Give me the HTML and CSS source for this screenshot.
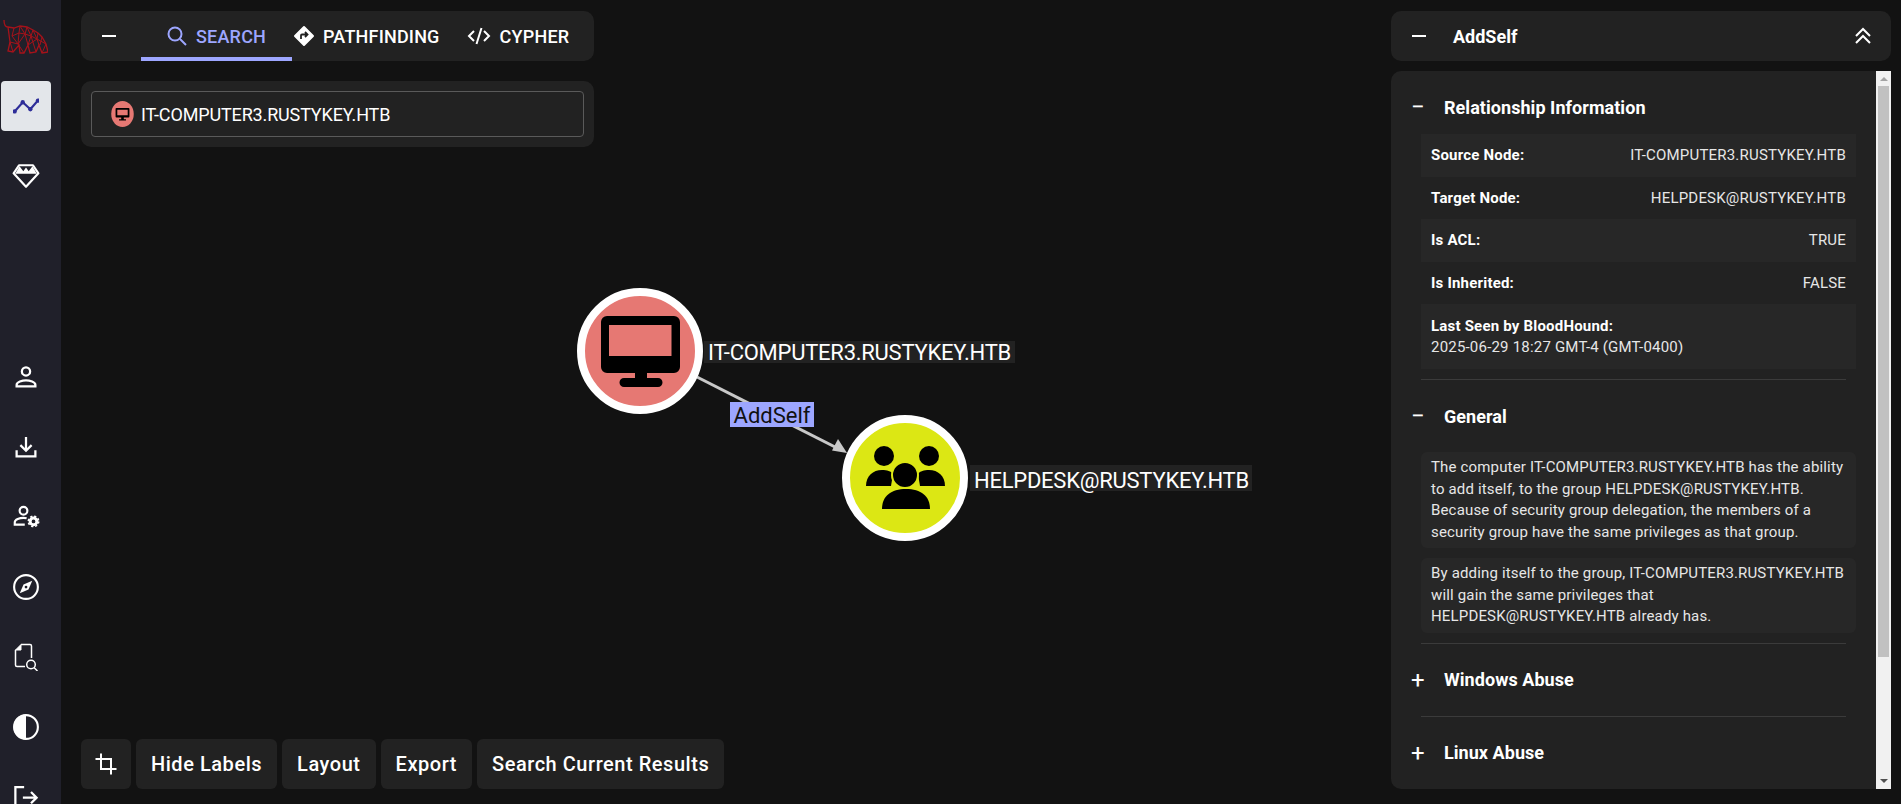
FILE: index.html
```html
<!DOCTYPE html>
<html lang="en">
<head>
  <meta charset="UTF-8">
  <title>BloodHound</title>
  <link rel="stylesheet" href="styles.css">
</head>
<body>
  <nav class="sidebar">
    <svg class="logo" viewBox="0 0 45 36" fill="none" stroke="#a5121a" stroke-width="1">
      <path d="M1 2C1 6 2 9 5 9L11 10L17 8L24 9L30 12L35 15L39 19L43 26L45 34L39 35L36 27L33 34L27 35L25 27L21 35L17 35L16 27L10 34L5 33L7 24L5 9" stroke-width="1.300"/>
      <path d="M11 10L9 18L16 15L17 8L22 16L24 9L28 18L30 12L34 21L35 15L39 19L37 27M16 15L22 16L28 18L34 21L43 26L39 35M9 18L15 26L16 15M7 24L15 26L22 16L25 27L28 18L33 34M34 21L36 27M15 26L21 35M25 27L34 21M10 34L7 24"/>
    </svg>
    <div class="nav-btn active">
      <svg viewBox="0 0 24 24" class="nav-icon"><path d="M1.500 17L9 8.500 16 15 23 7" fill="none" stroke="#2e2e99" stroke-width="2"/><circle cx="1.500" cy="17" r="2" fill="#2e2e99"/><circle cx="9" cy="8.500" r="2" fill="#2e2e99"/><circle cx="16" cy="15" r="2" fill="#2e2e99"/><circle cx="23" cy="7" r="2" fill="#2e2e99"/></svg>
    </div>
    <div class="nav-btn">
      <svg viewBox="0 0 26 24" class="nav-icon gem"><path d="M6.500 2h13l5 7.500L13 22 1.500 9.500z" fill="none" stroke="#fff" stroke-width="2" stroke-linejoin="round"/><path d="M7 3l3.500 4.500L13 4l2.500 3.500L19 3l4 7H3z" fill="#fff"/></svg>
    </div>
    <div class="nav-lower">
      <div class="nav-btn">
        <svg viewBox="0 0 24 24" class="nav-icon"><circle cx="12" cy="7.500" r="3.300" fill="none" stroke="#fff" stroke-width="1.800"/><path d="M4.500 19.500v-1.200c0-2.300 4.500-3.600 7.500-3.600s7.500 1.300 7.500 3.600v1.200z" fill="none" stroke="#fff" stroke-width="1.800"/></svg>
      </div>
      <div class="nav-btn">
        <svg viewBox="0 0 24 24" class="nav-icon"><path d="M12 4v10.500M7.500 10.500l4.500 4.500 4.500-4.500M4.500 14.500v5h15v-5" fill="none" stroke="#fff" stroke-width="1.800"/></svg>
      </div>
      <div class="nav-btn">
        <svg viewBox="0 0 24 24" class="nav-icon"><circle cx="10" cy="7" r="3.100" fill="none" stroke="#fff" stroke-width="1.700"/><path d="M12.500 13c-.8-.2-1.700-.3-2.500-.3-3 0-7 1.300-7 3.600v1.800h8" fill="none" stroke="#fff" stroke-width="1.700"/><circle cx="18" cy="15.500" r="2.700" fill="none" stroke="#fff" stroke-width="2.400"/><circle cx="18" cy="15.500" r="4.200" fill="none" stroke="#fff" stroke-width="1.200" stroke-dasharray="1.800 1.500"/></svg>
      </div>
      <div class="nav-btn">
        <svg viewBox="0 0 24 24" class="nav-icon"><circle cx="12" cy="12" r="9.500" fill="none" stroke="#fff" stroke-width="1.700"/><path d="M17 7l-3 7-7 3 3-7z" fill="#fff"/><circle cx="12" cy="12" r="1.100" fill="#20202a"/></svg>
      </div>
      <div class="nav-btn">
        <svg viewBox="0 0 26 28" class="nav-icon tall"><path d="M2.500 7V22a1.500 1.500 0 0 0 1.500 1.500h8M8 1.500h9A1.500 1.500 0 0 1 18.500 3V15" fill="none" stroke="#fff" stroke-width="1.500"/><path d="M8 1.500V7H2.500z" fill="#fff" stroke="#fff" stroke-linejoin="round"/><circle cx="18" cy="21.500" r="4.300" fill="none" stroke="#fff" stroke-width="1.500"/><path d="M21 24.500l3.500 3.500" stroke="#fff" stroke-width="1.500"/></svg>
      </div>
      <div class="nav-btn">
        <svg viewBox="0 0 24 24" class="nav-icon"><circle cx="12" cy="12" r="9.500" fill="none" stroke="#fff" stroke-width="1.700"/><path d="M12 2a10 10 0 0 0 0 20z" fill="#fff"/></svg>
      </div>
      <div class="nav-btn">
        <svg viewBox="0 0 24 24" class="nav-icon"><path d="M10.500 4H3.500v17h7M9.500 12.500h11M16 8l4.500 4.500L16 17" fill="none" stroke="#fff" stroke-width="1.800"/></svg>
      </div>
    </div>
  </nav>

  <main class="graph">
    <svg class="canvas" viewBox="0 0 1840 804" width="1840" height="804">
      <line x1="636" y1="377" x2="780" y2="450" stroke="#c8c8c8" stroke-width="3"/>
      <path d="M786 453l-15-2.500 6-11.500z" fill="#c8c8c8"/>
      <circle cx="579" cy="351" r="59" fill="#e67873" stroke="#fff" stroke-width="8"/>
      <circle cx="844" cy="478" r="59" fill="#dce714" stroke="#fff" stroke-width="8"/>

      <path d="M546 316h67a6 6 0 0 1 6 6v45a6 6 0 0 1-6 6h-27v5h11a4.500 4.500 0 0 1 0 9h-34a4.500 4.500 0 0 1 0-9h11v-5h-28a6 6 0 0 1-6-6v-45a6 6 0 0 1 6-6zM548 325v31h62.500v-31z" fill="#000" fill-rule="evenodd"/>

      <g fill="#000">
        <ellipse cx="823" cy="456" rx="10" ry="10"/>
        <ellipse cx="868" cy="456" rx="10" ry="10"/>
        <path d="M805 486c0-10 7-16 16-16 5 0 9 1 11 4l-2 12z"/>
        <path d="M884 486c0-10-7-16-16-16-5 0-9 1-11 4l2 12z"/>
        <ellipse cx="844" cy="475" rx="13" ry="13" stroke="#dce714" stroke-width="2"/>
        <path d="M821 509c0-13 9-20 24-20s24 7 24 20z"/>
      </g>

      <rect class="label-bg" x="643" y="341" width="311" height="22"/>
      <text class="node-label" x="647" y="360">IT-COMPUTER3.RUSTYKEY.HTB</text>
      <rect class="label-bg" x="909" y="465" width="282" height="26"/>
      <text class="node-label" x="913" y="488">HELPDESK@RUSTYKEY.HTB</text>
      <rect x="669" y="402" width="84" height="25" fill="#9da6ff"/>
      <text class="edge-label" x="711" y="423" text-anchor="middle">AddSelf</text>
    </svg>

    <section class="search-area">
      <div class="card tabs">
        <span class="tab-toggle"><svg viewBox="0 0 24 24" class="icon"><path d="M5 12h14" stroke="currentColor" stroke-width="2"/></svg></span>
        <div class="tab selected">
          <svg viewBox="0 0 24 24" class="icon"><circle cx="10" cy="10" r="6.500" fill="none" stroke="currentColor" stroke-width="2"/><path d="M15 15l6 6" stroke="currentColor" stroke-width="2"/></svg>
          SEARCH
        </div>
        <div class="tab">
          <svg viewBox="0 0 24 24" class="icon"><path d="M12 3L21 12 12 21 3 12z" fill="#fff" stroke="#fff" stroke-linejoin="round" stroke-width="2"/><path d="M9 15v-3.500a1 1 0 0 1 1-1h5M13 8l2.500 2.500L13 13" fill="none" stroke="#222" stroke-width="1.800"/></svg>
          PATHFINDING
        </div>
        <div class="tab code">
          <svg viewBox="0 0 24 24" class="icon"><path d="M7 7l-5 5 5 5M17 7l5 5-5 5M14.500 4l-5 16" fill="none" stroke="#fff" stroke-width="2"/></svg>
          CYPHER
        </div>
      </div>
      <div class="card search-card">
        <div class="search-input">
          <svg viewBox="0 0 26 30" class="input-icon"><ellipse cx="13" cy="15" rx="13" ry="15" fill="#e67873"/><path d="M6 8h14a1 1 0 0 1 1 1v9a1 1 0 0 1-1 1h-5.500v2h2.500v1.500H9V21h2.500v-2H6a1 1 0 0 1-1-1V9a1 1 0 0 1 1-1zm1 2v6.500h12V10z" fill="#000" fill-rule="evenodd"/></svg>
          IT-COMPUTER3.RUSTYKEY.HTB
        </div>
      </div>
    </section>

    <div class="graph-buttons">
      <div class="graph-btn square"><svg viewBox="0 0 24 24" class="icon"><path d="M7 1.500V17h15.500M1.500 7H17v15.500" fill="none" stroke="#fff" stroke-width="2"/></svg></div>
      <div class="graph-btn">Hide Labels</div>
      <div class="graph-btn">Layout</div>
      <div class="graph-btn">Export</div>
      <div class="graph-btn">Search Current Results</div>
    </div>

    <aside class="details">
      <div class="card details-head">
        <svg viewBox="0 0 24 24" class="icon"><path d="M5 12h14" stroke="#fff" stroke-width="2"/></svg>
        <span class="details-title">AddSelf</span>
        <svg viewBox="0 0 24 24" class="icon collapse"><path d="M5 12l7-7 7 7M5 19l7-7 7 7" fill="none" stroke="#fff" stroke-width="2"/></svg>
      </div>
      <div class="details-body">
        <div class="details-scroll">
          <div class="section-head first">
            <span class="sign">&minus;</span>
            <h2>Relationship Information</h2>
          </div>
          <div class="prop shaded"><b>Source Node:</b><span>IT-COMPUTER3.RUSTYKEY.HTB</span></div>
          <div class="prop"><b>Target Node:</b><span>HELPDESK@RUSTYKEY.HTB</span></div>
          <div class="prop shaded"><b>Is ACL:</b><span>TRUE</span></div>
          <div class="prop"><b>Is Inherited:</b><span>FALSE</span></div>
          <div class="prop shaded stacked"><b>Last Seen by BloodHound:</b><span>2025-06-29 18:27 GMT-4 (GMT-0400)</span></div>
          <hr class="rule">

          <div class="section-head">
            <span class="sign">&minus;</span>
            <h2>General</h2>
          </div>
          <p class="info">The computer IT-COMPUTER3.RUSTYKEY.HTB has the ability to add itself, to the group HELPDESK@RUSTYKEY.HTB. Because of security group delegation, the members of a security group have the same privileges as that group.</p>
          <p class="info">By adding itself to the group, IT-COMPUTER3.RUSTYKEY.HTB will gain the same privileges that HELPDESK@RUSTYKEY.HTB already has.</p>
          <hr class="rule">

          <div class="section-head">
            <span class="sign">+</span>
            <h2>Windows Abuse</h2>
          </div>
          <hr class="rule tight">

          <div class="section-head">
            <span class="sign">+</span>
            <h2>Linux Abuse</h2>
          </div>
        </div>
        <div class="scrollbar">
          <span class="arrow up"></span>
          <span class="thumb"></span>
          <span class="arrow down"></span>
        </div>
      </div>
    </aside>
  </main>
</body>
</html>
```

FILE: styles.css
```css
html, body {
  margin: 0;
  padding: 0;
  height: 100%;
  overflow: hidden;
  background-color: #121212;
  font-family: 'Roboto', sans-serif;
  color: #fff;
}

body {
  display: flex;
}

.sidebar {
  width: 61px;
  flex-shrink: 0;
  height: 100%;
  background-color: #20202a;
  overflow: hidden;
  padding-top: 18px;
  box-sizing: border-box;
}

.logo {
  display: block;
  width: 45px;
  height: 36px;
  margin: 0 0 27px 3px;
}

.nav-btn {
  width: 50px;
  height: 50px;
  margin: 0 0 20px 1px;
  border-radius: 4px;
  display: flex;
  align-items: center;
  justify-content: center;
}

.nav-btn.active {
  background-color: #e3e6ea;
}

.nav-icon {
  width: 30px;
  height: 30px;
  flex-shrink: 0;
}

.nav-btn.active .nav-icon {
  width: 26px;
  height: 26px;
}

.nav-icon.gem {
  width: 28px;
  height: 26px;
}

.nav-icon.tall {
  width: 26px;
  height: 28px;
}

.nav-lower {
  margin-top: 151px;
}

.graph {
  position: relative;
  flex: 1;
  height: 100%;
}

.canvas {
  display: block;
}

.label-bg {
  fill: #222;
}

.node-label {
  font-size: 22px;
  letter-spacing: -0.25px;
  fill: #fff;
}

.edge-label {
  font-size: 22px;
  fill: #111;
}

.card {
  background-color: #222;
  border-radius: 10px;
}

.icon {
  width: 24px;
  height: 24px;
  flex-shrink: 0;
}

.search-area {
  position: absolute;
  top: 11px;
  left: 20px;
  width: 513px;
  display: flex;
  flex-direction: column;
  gap: 20px;
}

.tabs {
  height: 50px;
  display: flex;
  align-items: stretch;
  overflow: hidden;
  color: #fff;
}

.tab-toggle {
  width: 60px;
  flex-shrink: 0;
  display: flex;
  align-items: center;
  padding-left: 16px;
  box-sizing: border-box;
}

.tab {
  display: flex;
  flex-shrink: 0;
  align-items: center;
  gap: 7px;
  padding: 0 27px 0 0;
  font-size: 18px;
  font-weight: 500;
  letter-spacing: 0.2px;
}

.tab.code {
  gap: 9px;
}

.tab.selected {
  width: 151px;
  box-sizing: border-box;
  padding: 0 0 0 24px;
  color: #9da6ff;
  box-shadow: inset 0 -4px 0 #9da6ff;
}

.search-card {
  padding: 10px;
}

.search-input {
  height: 46px;
  border: 1px solid #5a5a5a;
  border-radius: 4px;
  box-sizing: border-box;
  display: flex;
  align-items: center;
  gap: 6px;
  padding-left: 18px;
  font-size: 18px;
  letter-spacing: -0.15px;
}

.input-icon {
  width: 25px;
  height: 26px;
}

.graph-buttons {
  position: absolute;
  left: 20px;
  top: 739px;
  display: flex;
  gap: 5px;
}

.graph-btn {
  height: 50px;
  padding: 0 15px;
  background-color: #222;
  border-radius: 6px;
  display: flex;
  align-items: center;
  font-size: 20px;
  font-weight: 500;
  letter-spacing: 0.54px;
}

.graph-btn.square {
  width: 50px;
  padding: 0;
  justify-content: center;
}

.details {
  position: absolute;
  top: 11px;
  left: 1330px;
  width: 500px;
  display: flex;
  flex-direction: column;
  gap: 10px;
}

.details-head {
  height: 50px;
  display: flex;
  align-items: center;
  padding: 0 16px;
}

.details-title {
  flex: 1;
  margin-left: 22px;
  font-size: 18px;
  font-weight: 700;
}

.details-body {
  height: 718px;
  display: flex;
  background-color: #222;
  border-radius: 10px 0 0 10px;
  overflow: hidden;
}

.details-scroll {
  flex: 1;
  padding: 0 20px 0 30px;
  overflow: hidden;
}

.section-head {
  height: 72px;
  display: flex;
  align-items: center;
  margin-left: -10px;
}

.section-head.first {
  margin-bottom: -9px;
}

.sign {
  width: 33px;
  font-size: 24px;
  font-weight: 400;
  line-height: 1;
}

.section-head h2 {
  margin: 0;
  font-size: 18px;
  font-weight: 700;
  letter-spacing: 0.05px;
}

.prop {
  display: flex;
  justify-content: space-between;
  align-items: center;
  height: 42.5px;
  padding: 0 10px;
  font-size: 15px;
  letter-spacing: 0.2px;
}

.prop b {
  font-weight: 700;
}

.prop span {
  font-weight: 400;
  color: #e6e6e6;
}

.prop.shaded {
  background-color: #272727;
}

.prop.stacked {
  height: 65px;
  flex-direction: column;
  align-items: flex-start;
  justify-content: center;
  gap: 3px;
}

.rule {
  border: none;
  border-top: 1px solid #3b3b3b;
  margin: 10px 10px 0 0;
}

.rule.tight {
  margin-top: 0;
}

.info {
  margin: 0 0 10px;
  padding: 5px 10px;
  background-color: #272727;
  border-radius: 6px;
  font-size: 15px;
  line-height: 21.5px;
  letter-spacing: 0.16px;
  color: #e6e6e6;
}

.scrollbar {
  width: 15px;
  flex-shrink: 0;
  background-color: #f1f1f1;
  display: flex;
  flex-direction: column;
  align-items: center;
}

.thumb {
  width: 11px;
  height: 571px;
  background-color: #c1c1c1;
}

.arrow {
  width: 0;
  height: 0;
  border-left: 4px solid transparent;
  border-right: 4px solid transparent;
}

.arrow.up {
  border-bottom: 4px solid #a3a3a3;
  margin: 6px 0 5px;
}

.arrow.down {
  margin-top: auto;
  margin-bottom: 6px;
  border-top: 4px solid #505050;
}
```
